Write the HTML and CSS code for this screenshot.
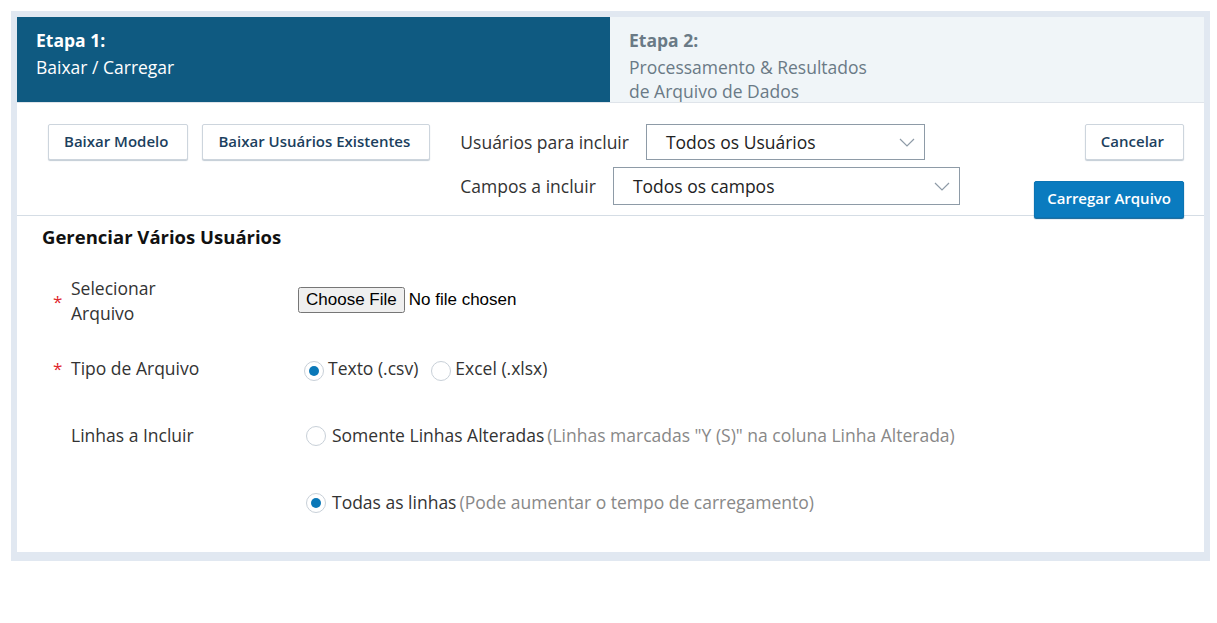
FILE: index.html
```html
<!DOCTYPE html>
<html>
<head>
<title>Gerenciar Vários Usuários</title>
<link rel="stylesheet" href="styles.css">
</head>
<body>
<div class="frame">
  <div class="panel">
    <div class="steps">
      <div class="step step-active">
        <div class="step-title">Etapa 1:</div>
        <div>Baixar / Carregar</div>
      </div>
      <div class="step">
        <div class="step-title">Etapa 2:</div>
        <div>Processamento &amp; Resultados<br>de Arquivo de Dados</div>
      </div>
    </div>

    <div class="toolbar">
      <div class="toolbar-left">
        <button class="btn" type="button">Baixar Modelo</button>
        <button class="btn" type="button">Baixar Usuários Existentes</button>
      </div>
      <div class="filters">
        <div class="filter">
          <span class="filter-label">Usuários para incluir</span>
          <div class="select select-users">
            <span>Todos os Usuários</span>
            <svg width="16" height="9" viewBox="0 0 16 9"><path d="M1 1 L8 8 L15 1" fill="none" stroke="#8e9ba7" stroke-width="1.2"/></svg>
          </div>
        </div>
        <div class="filter filter-fields">
          <span class="filter-label">Campos a incluir</span>
          <div class="select select-fields">
            <span>Todos os campos</span>
            <svg width="16" height="9" viewBox="0 0 16 9"><path d="M1 1 L8 8 L15 1" fill="none" stroke="#8e9ba7" stroke-width="1.2"/></svg>
          </div>
        </div>
      </div>
      <div class="toolbar-right">
        <button class="btn" type="button">Cancelar</button>
        <button class="btn btn-primary" type="button">Carregar Arquivo</button>
      </div>
    </div>

    <div class="content">
      <h2 class="content-title">Gerenciar Vários Usuários</h2>

      <div class="form-row row-file">
        <span class="req">*</span>
        <label class="field-label" for="datafile">Selecionar Arquivo</label>
        <div class="field field-file"><input id="datafile" class="file-input" type="file"></div>
      </div>

      <div class="form-row row-type">
        <span class="req">*</span>
        <span class="field-label">Tipo de Arquivo</span>
        <div class="field options">
          <span class="radio checked"></span><span class="opt-text">Texto (.csv)</span>
          <span class="radio radio-next"></span><span class="opt-text">Excel (.xlsx)</span>
        </div>
      </div>

      <div class="form-row row-lines">
        <span class="req"></span>
        <span class="field-label">Linhas a Incluir</span>
        <div class="field options options-wide">
          <span class="radio"></span><span class="opt-text">Somente Linhas Alteradas</span><span class="hint">(Linhas marcadas "Y (S)" na coluna Linha Alterada)</span>
        </div>
      </div>

      <div class="form-row row-all">
        <span class="req"></span>
        <span class="field-label"></span>
        <div class="field options options-wide">
          <span class="radio checked"></span><span class="opt-text">Todas as linhas</span><span class="hint">(Pode aumentar o tempo de carregamento)</span>
        </div>
      </div>
    </div>
  </div>
</div>
</body>
</html>
```

FILE: styles.css
```css
body
{
	margin: 0;
	font-family: "Open Sans", "Noto Sans", sans-serif;
	font-size: 17.5px;
	color: #333;
	background: #fff;
}
.frame
{
	margin: 11px 0 0 11px;
	width: 1187px;
	padding: 6px 6px 9px 6px;
	background: #e1e8f1;
}
.panel
{
	background: #fff;
}

/* step header */
.steps
{
	display: flex;
	height: 85px;
	border-bottom: 1px solid #dfe4ea;
}
.step
{
	flex: 1;
	padding: 11px 19px 0 19px;
	line-height: 24px;
	background: #f0f5f8;
	color: #6a7a86;
}
.step-active
{
	flex: 0 0 593px;
	box-sizing: border-box;
	background: #0f5a81;
	color: #fff;
}
.step-title
{
	margin-bottom: 3px;
	font-weight: 700;
}

/* toolbar */
.toolbar
{
	display: flex;
	align-items: flex-start;
	box-sizing: border-box;
	height: 113px;
	padding: 21px 20px 0 31px;
	border-bottom: 1px solid #d5dde5;
}
.toolbar-left
{
	display: flex;
	gap: 14px;
}
.btn
{
	height: 36px;
	padding: 0 19px 3px 15px;
	font-family: "Open Sans", sans-serif;
	font-size: 15px;
	font-weight: 600;
	color: #1c3f5e;
	background: #fff;
	border: 1px solid #cdd5dd;
	border-radius: 2px;
	box-shadow: 0 1px 1px #c3ccd5;
}
.btn-primary
{
	height: 37px;
	margin-top: 21px;
	padding: 0 12px 4px 12px;
	color: #fff;
	background: #0a7bbf;
	border-color: #0a74b4;
	box-shadow: 0 1px 1px #0a5f94;
}
.filters
{
	display: flex;
	flex-direction: column;
	gap: 7px;
	margin-left: 30px;
}
.filter
{
	display: flex;
	align-items: center;
	gap: 17px;
}
.filter-label
{
	color: #333;
}
.select
{
	display: flex;
	align-items: center;
	justify-content: space-between;
	box-sizing: border-box;
	height: 36px;
	padding: 0 9px 0 19px;
	border: 1px solid #8e9ba7;
	color: #222;
}
.select-users
{
	width: 279px;
}
.select-fields
{
	width: 347px;
	height: 38px;
}
.toolbar-right
{
	margin-left: auto;
	display: flex;
	flex-direction: column;
	align-items: flex-end;
}

/* form */
.content
{
	padding: 9px 0 37px 25px;
}
.content-title
{
	margin: 0;
	font-size: 18.5px;
	line-height: 24px;
	font-weight: 700;
	color: #111;
}
.form-row
{
	display: flex;
	align-items: center;
	margin-left: 11px;
	line-height: 25px;
}
.row-file
{
	margin-top: 27px;
}
.row-type
{
	margin-top: 30px;
}
.row-lines
{
	margin-top: 42px;
}
.row-all
{
	margin-top: 42px;
}
.req
{
	flex: 0 0 18px;
	color: #e0262c;
	font-size: 17px;
}
.field-label
{
	flex: 0 0 227px;
	box-sizing: border-box;
	padding-right: 90px;
	color: #333;
}
.field-file
{
	margin-bottom: 3px;
}
.file-input
{
	font-family: "Liberation Sans", Arial, sans-serif;
	font-size: 17px;
	color: #000;
}
.options
{
	display: flex;
	align-items: center;
	padding-left: 6px;
}
.options-wide
{
	padding-left: 8px;
}
.radio
{
	box-sizing: border-box;
	width: 20px;
	height: 20px;
	margin-top: 4px;
	border: 1px solid #c8d0d8;
	border-radius: 50%;
	background: #fff;
	display: flex;
	align-items: center;
	justify-content: center;
}
.options-wide .radio
{
	margin-top: 0;
}
.radio.checked::after
{
	content: "";
	width: 10px;
	height: 10px;
	border-radius: 50%;
	background: #0a78b8;
}
.radio-next
{
	margin-left: 13px;
}
.opt-text
{
	margin-left: 4px;
	color: #333;
}
.options-wide .opt-text
{
	margin-left: 6px;
}
.hint
{
	margin-left: 3px;
	color: #888;
}
```
